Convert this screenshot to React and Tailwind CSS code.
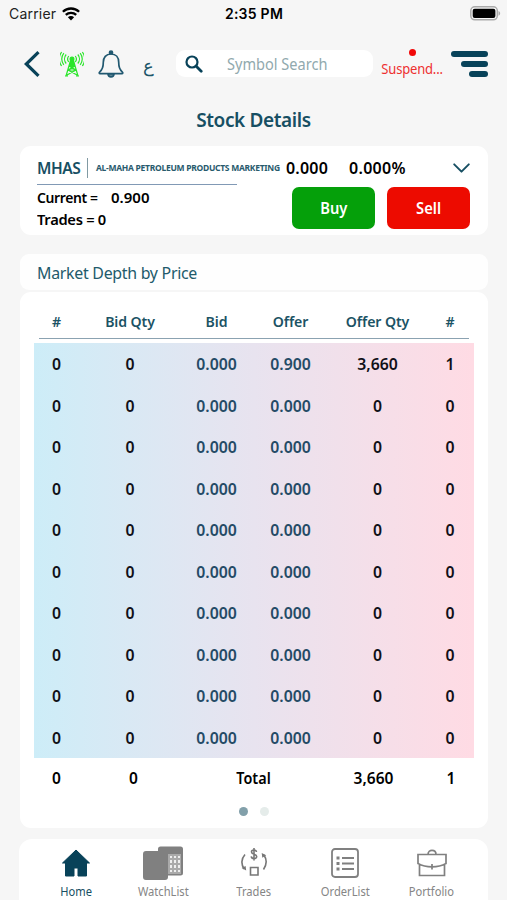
import { ChevronDown } from "lucide-react";

const levels = Array.from({ length: 10 }, (_, i) => ({
  bids: "0",
  bidQty: "0",
  bid: "0.000",
  offer: i === 0 ? "0.900" : "0.000",
  offerQty: i === 0 ? "3,660" : "0",
  offers: i === 0 ? "1" : "0",
}));

const headings = ["#", "Bid Qty", "Bid", "Offer", "Offer Qty", "#"];

const columns = "grid grid-cols-[45px_102px_71px_77px_97px_48px] text-center";

function StatusBar() {
  return (
    <div className="flex h-[27px] items-center justify-between pl-[9px] pr-[6px] font-['Inter',sans-serif] text-black">
      <div className="flex w-[150px] items-center gap-[6px] text-[14px]">
        <span className="inline-block w-[47px] whitespace-nowrap tracking-[0.2px] text-[#222]">Carrier</span>
        <svg width="18" height="14" viewBox="0 0 18 14" fill="none" stroke="#000" strokeWidth="2.3">
          <path d="M0.9 4.8a11.6 11.6 0 0 1 16.2 0M3.8 7.9a7.5 7.5 0 0 1 10.4 0" />
          <path d="M9 13.5 5.9 10.3a4.4 4.4 0 0 1 6.2 0z" fill="#000" stroke="none" />
        </svg>
      </div>
      <span className="pr-[2px] text-[14px] font-semibold tracking-[0.25px]">2:35 PM</span>
      <div className="flex w-[150px] justify-end">
        <svg width="31" height="15" viewBox="0 0 31 15">
          <rect x="0.8" y="0.8" width="26.5" height="13" rx="4" fill="#f8f8f8" stroke="#aaa" strokeWidth="1.5" />
          <rect x="2.7" y="2.7" width="22.7" height="9.2" rx="2" fill="#000" />
          <path d="M28.5 5c2.2.8 2.2 3.9 0 4.7z" fill="#aaa" />
        </svg>
      </div>
    </div>
  );
}

function AntennaIcon() {
  return (
    <svg width="24" height="26" viewBox="0 0 24 26" fill="none" stroke="#2be52b" strokeWidth="1.2">
      <path d="M11 8 6 25M13 8l5 17M9 15h6M8 19h8M9 15l7 4-9 5M15 15l-7 4 9 5M10 11l5 4M14 11l-5 4M5 25h3M16 25h3" />
      <path d="M10.500 8h3L15 16H9z" fill="#2be52b" stroke="none" />
      <circle cx="12" cy="8" r="1.9" fill="#2be52b" />
      <path d="M8.700 5a5 5 0 0 0 0 6M6.200 3.500a7 7 0 0 0 0 9M3.800 2.200a10 10 0 0 0 0 11.600M1.600 1a12.500 12.500 0 0 0 0 14" />
      <path d="M15.300 5a5 5 0 0 1 0 6M17.800 3.500a7 7 0 0 1 0 9M20.200 2.200a10 10 0 0 1 0 11.600M22.400 1a12.500 12.500 0 0 1 0 14" />
    </svg>
  );
}

function BellIcon() {
  return (
    <svg width="26" height="28" viewBox="0 0 26 28" fill="none" stroke="#215870" strokeWidth="1.700" strokeLinejoin="round">
      <circle cx="13" cy="2.500" r="1.500" fill="#215870" />
      <path d="M13 4c-5 0-7.700 3.500-7.700 8.300 0 5.200-.9 7.500-3.500 9.500-1 .8-.7 1.900.4 1.900h21.600c1.100 0 1.400-1.100.4-1.900-2.600-2-3.500-4.300-3.500-9.500C20.700 7.500 18 4 13 4z" />
      <path d="M10 24c.2 3.800 5.800 3.800 6 0z" fill="#6b8c9b" />
    </svg>
  );
}

function Header() {
  return (
    <header className="flex h-[73px] items-center pl-[24px] pr-[18px]">
      <svg width="16" height="26" viewBox="0 0 16 26" fill="none" stroke="#084259" strokeWidth="3.200">
        <path d="M14.500 1.200 2.300 13l12.200 11.800" />
      </svg>
      <div className="ml-[20px]"><AntennaIcon /></div>
      <div className="ml-[14px]"><BellIcon /></div>
      <span className="ml-[19px] w-[14px] pt-1 font-['DejaVu_Sans',sans-serif] text-[18px] leading-5 text-[#1d566a]">ع</span>
      <div className="ml-[19px] flex h-[27px] w-[197px] items-center rounded-[9px] bg-white pl-[9px]">
        <svg width="18" height="18" viewBox="0 0 18 18" fill="none" stroke="#084259" strokeLinecap="round">
          <circle cx="7" cy="7" r="5.500" strokeWidth="2.200" />
          <path d="m11.500 11.500 4.700 4.700" strokeWidth="2.800" />
        </svg>
        <span className="ml-6 mt-px origin-left scale-x-[0.91] whitespace-nowrap text-[16px] text-[#91a9ae]">Symbol Search</span>
      </div>
      <div className="ml-[8px] flex h-[29px] w-[62px] flex-col items-center">
        <span className="h-[7px] w-[7px] shrink-0 rounded-full bg-[#f10808]" />
        <span className="scale-x-[0.93] whitespace-nowrap text-[14px] leading-[25px] tracking-[-0.200px] text-[#ee3030]">Suspend...</span>
      </div>
      <div className="ml-[8px] flex w-[37px] shrink-0 flex-col items-end gap-1">
        <span className="h-[6px] w-[37px] rounded-full bg-[#084259]" />
        <span className="h-[6px] w-[27px] rounded-full bg-[#084259]" />
        <span className="h-[6px] w-[19px] rounded-full bg-[#084259]" />
      </div>
    </header>
  );
}

function StockSummary() {
  return (
    <section className="ml-5 mr-[19px] mt-[11px] h-[89px] rounded-[11px] bg-white pl-[17px] pr-[18px] pt-[11px]">
      <div className="flex h-[21px] items-center whitespace-nowrap text-[16px] font-semibold text-black">
        <span className="w-[50px] origin-left scale-x-[0.97] tracking-[-0.500px] text-[#174f63]">MHAS</span>
        <span className="h-5 w-px bg-[#819aa3]" />
        <span className="ml-2 w-[190px] pt-px text-[8.500px] font-bold tracking-[-0.280px] text-[#285b6d]">AL-MAHA PETROLEUM PRODUCTS MARKETING</span>
        <span className="w-[63px] tracking-[0.200px]">0.000</span>
        <span className="tracking-[0.300px]">0.000%</span>
        <ChevronDown className="ml-auto h-[18px] w-[17px] text-[#174f63]" viewBox="5 6 14 12" strokeWidth={1.600} />
      </div>
      <div className="flex justify-between">
        <div className="w-[200px] pt-[6px] text-[15px] font-semibold leading-[22px] text-black">
          <div className="mb-px h-px bg-[#8199b5]" />
          <div className="flex h-[22px]">
            <span className="w-[74px] origin-left scale-x-[0.93] whitespace-nowrap tracking-[-0.400px]">Current =</span>
            <span>0.900</span>
          </div>
          <div className="origin-left scale-x-[0.98] tracking-[-0.300px]">Trades = 0</div>
        </div>
        <div className="flex gap-3 pt-[9px] text-[16px] font-semibold text-white">
          <button className="h-[42px] w-[83px] rounded-[7px] bg-[#05a00a]"><span className="inline-block scale-x-[0.92]">Buy</span></button>
          <button className="h-[42px] w-[83px] rounded-[7px] bg-[#ed0b00]"><span className="inline-block scale-x-[0.92]">Sell</span></button>
        </div>
      </div>
    </section>
  );
}

function DepthTable() {
  return (
    <section className="ml-5 mr-[19px] mt-[2px] h-[536px] rounded-[11px] bg-white px-[14px] pt-[16px]">
      <div className={`${columns} h-[30px] whitespace-nowrap text-[15px] font-semibold leading-[27px] text-[#1b5365]`}>
        {headings.map((heading, i) => (
          <span key={i} className="scale-x-[0.94] tracking-[-0.100px]">{heading}</span>
        ))}
      </div>
      <div className="mx-[5px] mb-1 h-px bg-[#8ba2b1]" />
      <div className="bg-linear-to-r from-[#cdedf8] via-[#e8e3ef] to-[#ffdbe4]">
        {levels.map((level, i) => (
          <div key={i} className={`${columns} h-[41.500px] text-[15.800px] font-semibold leading-[43px] text-[#101018]`}>
            <span>{level.bids}</span>
            <span>{level.bidQty}</span>
            <span className="text-[#244b66]">{level.bid}</span>
            <span className="text-[#244b66]">{level.offer}</span>
            <span>{level.offerQty}</span>
            <span>{level.offers}</span>
          </div>
        ))}
      </div>
      <div className="grid h-[41px] grid-cols-[45px_109px_131px_109px_46px] text-center text-[15.500px] font-semibold leading-[41px] text-black">
        <span>0</span>
        <span>0</span>
        <span className="scale-x-[0.93]">Total</span>
        <span>3,660</span>
        <span>1</span>
      </div>
      <div className="mt-[8px] flex justify-center gap-[12px]">
        <span className="h-[9px] w-[9px] rounded-full bg-[#82a0aa]" />
        <span className="h-[9px] w-[9px] rounded-full bg-[#e5ecea]" />
      </div>
    </section>
  );
}

const tabs = [
  {
    label: "Home",
    width: "w-[75px]",
    icon: (
      <svg width="30" height="30" viewBox="0 0 30 30" fill="#084259" stroke="#084259" strokeLinejoin="round">
        <path d="M15 2 1.500 15H4.500v13h8.500v-8h4v8h8.500V15h3L15 2z" />
      </svg>
    ),
  },
  {
    label: "WatchList",
    width: "w-[99px]",
    icon: (
      <svg width="40" height="34" viewBox="0 0 40 34" fill="#808080">
        <path d="M3 5h12V3q0-2.500 2.500-2.500h20Q40 .5 40 3v24q0 2.500-2.500 2.500H25V31q0 3-3 3H3q-3 0-3-3V8q0-3 3-3z" />
        <path d="M25 8h13v20H25z" fill="#aaa" />
        <path d="M27 10h2v2h-2zM31 10h2v2h-2zM35 10h2v2h-2zM27 14h2v3h-2zM31 14h2v3h-2zM35 14h2v3h-2zM27 19h2v3h-2zM31 19h2v3h-2zM35 19h2v3h-2zM27 24h2v2h-2zM31 24h2v2h-2zM35 24h2v2h-2z" fill="#eee" />
      </svg>
    ),
  },
  {
    label: "Trades",
    width: "w-[83px]",
    icon: (
      <svg width="28" height="32" viewBox="0 0 28 32" fill="none" stroke="#777" strokeWidth="1.600">
        <path d="M16.500 5c-.4-2.700-5-2.700-5 0 0 2.600 5.200 1.800 5.200 4.500 0 2.800-5.100 2.800-5.500-.1M14 1v12.500" />
        <path d="M10.500 20.500h7.500V28h-7.500z" />
        <path d="M5 7.500c-4 4.500-4.200 9-1 14.500M23.500 22.500c3.500-5 3.700-9.500.5-14.500" />
        <path d="m1.600 21 4.600 2.500-.6-4.600zM22.300 10.700l-.6-4.600 4.500 2.200z" fill="#777" stroke="none" />
      </svg>
    ),
  },
  {
    label: "OrderList",
    width: "w-[99px]",
    icon: (
      <svg width="28" height="30" viewBox="0 0 28 30" fill="none" stroke="#808080" strokeWidth="1.800">
        <rect x="1" y="1" width="26" height="28" rx="3" />
        <path d="M11 10h12M11 15.500h12M11 21h12" />
        <path d="M5.500 10h3M5.500 15.500h3M5.500 21h3" strokeWidth="3" />
      </svg>
    ),
  },
  {
    label: "Portfolio",
    width: "w-[74px]",
    icon: (
      <svg width="30" height="28" viewBox="0 0 30 28" fill="none" stroke="#808080" strokeWidth="1.700">
        <path d="M11 5.500c0-5.500 8-5.500 8 0M1 5.500h28v9c-8 4.500-20 4.500-28 0zM2.500 15v11.500h25V15M15 15v5.500M12.500 17.800h5" />
      </svg>
    ),
  },
];

function TabBar() {
  return (
    <nav className="mx-[19px] mt-[11px] flex h-[61px] justify-center rounded-t-[13px] bg-white">
      {tabs.map((tab) => (
        <div key={tab.label} className={`${tab.width} flex flex-col items-center`}>
          <div className="flex h-[44px] items-center pt-[3px]">{tab.icon}</div>
          <span className={`scale-x-[0.93] text-[12px] leading-[17px] ${tab.label === "Home" ? "text-[#174f63]" : "text-[#858585]"}`}>{tab.label}</span>
        </div>
      ))}
    </nav>
  );
}

export default function App() {
  return (
    <main className="h-[900px] w-[507px] overflow-hidden bg-[#f6f6f6] font-['Noto_Sans',sans-serif]">
      <StatusBar />
      <Header />
      <h1 className="h-[35px] scale-x-[0.95] text-center text-[20px] font-semibold leading-[40px] tracking-[-0.400px] text-[#174f63]">Stock Details</h1>
      <StockSummary />
      <h2 className="ml-5 mr-[19px] mt-[19px] h-[36px] rounded-[9px] bg-[#fefefe] pl-[17px] text-[16.500px] leading-[37px] tracking-[-0.300px] text-[#225a6b]">
        <span className="inline-block origin-left scale-x-[0.965]">Market Depth by Price</span>
      </h2>
      <DepthTable />
      <TabBar />
    </main>
  );
}
